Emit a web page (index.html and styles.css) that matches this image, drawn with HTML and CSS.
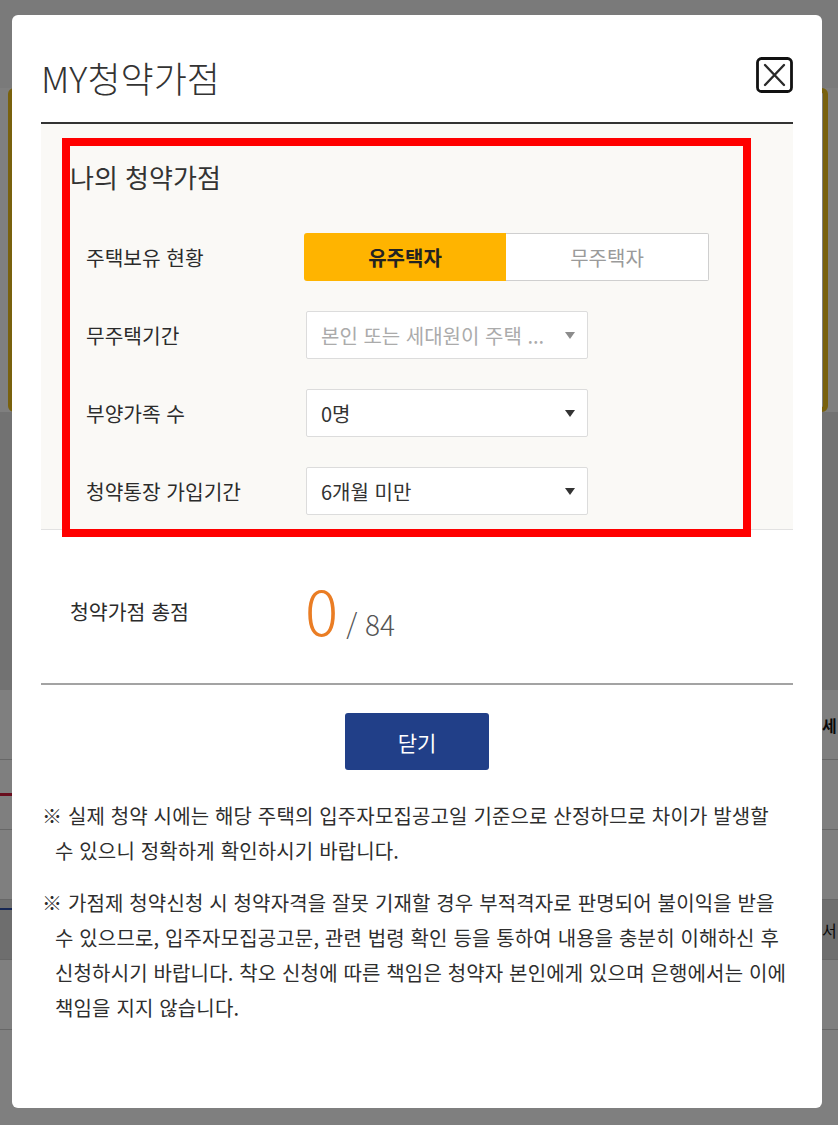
FILE: index.html
```html
<!DOCTYPE html>
<html lang="ko">
<head>
<meta charset="utf-8">
<title>MY청약가점</title>
<link rel="stylesheet" href="styles.css">
</head>
<body>
<div class="page">
  <div class="page-top"></div>
  <div class="page-card"></div>
  <div class="page-band"></div>
  <div class="page-head"><span class="page-text">세</span></div>
  <div class="page-row"><span class="mark-red"></span></div>
  <div class="page-row"></div>
  <div class="page-row page-row-gray"><span class="mark-blue"></span><span class="page-text">서</span></div>
  <div class="page-row"></div>
</div>
<div class="overlay"></div>

<div class="modal" role="dialog" aria-labelledby="modal-title">
  <div class="modal-header">
    <h1 id="modal-title" class="modal-title">MY청약가점</h1>
    <button class="close-btn" type="button" aria-label="닫기">
      <svg width="37" height="36" viewBox="0 0 37 36">
        <rect x="1.5" y="1.5" width="34" height="33" rx="4" fill="none" stroke="#111" stroke-width="2.8"/>
        <path d="M9 8 L28 28 M28 8 L9 28" stroke="#2a2a2a" stroke-width="2.4" stroke-linecap="round"/>
      </svg>
    </button>
  </div>

  <section class="score-form">
    <h2 class="form-title">나의 청약가점</h2>
    <div class="form-rows">
      <div class="form-row">
        <div class="form-label">주택보유 현황</div>
        <div class="toggle">
          <span class="toggle-item is-active">유주택자</span>
          <span class="toggle-item">무주택자</span>
        </div>
      </div>
      <div class="form-row">
        <div class="form-label">무주택기간</div>
        <div class="select is-disabled"><span class="select-text">본인 또는 세대원이 주택 ...</span><span class="caret"></span></div>
      </div>
      <div class="form-row">
        <div class="form-label">부양가족 수</div>
        <div class="select"><span class="select-text">0명</span><span class="caret"></span></div>
      </div>
      <div class="form-row">
        <div class="form-label">청약통장 가입기간</div>
        <div class="select"><span class="select-text">6개월 미만</span><span class="caret"></span></div>
      </div>
    </div>
  </section>

  <div class="total-row">
    <div class="total-label">청약가점 총점</div>
    <div class="total-score"><span class="score-num">0</span><span class="score-max">/ 84</span></div>
  </div>

  <div class="modal-footer">
    <button class="primary-btn" type="button">닫기</button>
  </div>

  <div class="notes">
    <p class="note">※ 실제 청약 시에는 해당 주택의 입주자모집공고일 기준으로 산정하므로 차이가 발생할 수 있으니 정확하게 확인하시기 바랍니다.</p>
    <p class="note">※ 가점제 청약신청 시 청약자격을 잘못 기재할 경우 부적격자로 판명되어 불이익을 받을 수 있으므로, 입주자모집공고문, 관련 법령 확인 등을 통하여 내용을 충분히 이해하신 후 신청하시기 바랍니다. 착오 신청에 따른 책임은 청약자 본인에게 있으며 은행에서는 이에 책임을 지지 않습니다.</p>
  </div>

  <div class="highlight"></div>
</div>
</body>
</html>
```

FILE: styles.css
```css
* { box-sizing: border-box; }

html, body {
  margin: 0;
  padding: 0;
  height: 100%;
  overflow: hidden;
}

body {
  font-family: "Noto Sans CJK KR", "Noto Sans", sans-serif;
  color: #333;
  background: #fff;
}

/* underlying page (dimmed by overlay) */
.page {
  width: 838px;
}
.page-top {
  height: 88px;
  background: #f4f4f4;
}
.page-card {
  height: 324px;
  margin: 0 10px 0 8px;
  border: 5px solid #f2c21a;
  border-radius: 6px;
  background: #fff;
}
.page-band {
  height: 278px;
  background: #e4e4e4;
}
.page-head {
  display: flex;
  justify-content: flex-end;
  align-items: center;
  height: 70px;
  border-bottom: 1px solid #cfcfcf;
}
.page-text {
  width: 16px;
  font-size: 16px;
  font-weight: 700;
  color: #111;
  white-space: nowrap;
}
.page-row {
  display: flex;
  justify-content: space-between;
  align-items: center;
  height: 70px;
  border-bottom: 1px solid #cfcfcf;
}
.page-row-gray {
  height: 60px;
  background: #dcdcdc;
}
.page-row-gray .page-text {
  font-weight: 400;
}
.mark-red {
  width: 30px;
  height: 3px;
  background: #d21a3a;
}
.mark-blue {
  align-self: flex-start;
  width: 30px;
  height: 2px;
  margin-top: 8px;
  background: #2e4fa8;
}

.overlay {
  position: fixed;
  inset: 0;
  background: rgba(0, 0, 0, 0.5);
}

/* modal */
.modal {
  position: fixed;
  left: 12px;
  top: 15px;
  width: 810px;
  height: 1093px;
  background: #fff;
  border-radius: 6px;
}

.modal-header {
  display: flex;
  align-items: center;
  justify-content: space-between;
  height: 109px;
  margin: 0 29px;
  padding: 42px 0 25px 0;
  border-bottom: 2px solid #333;
}
.modal-title {
  margin: 0;
  font-size: 36px;
  font-weight: 300;
  line-height: 40px;
  color: #333;
}
.close-btn {
  display: block;
  width: 37px;
  height: 36px;
  margin: -4px 0 0 0;
  padding: 0;
  border: 0;
  background: none;
}
.close-btn svg { display: block; }

/* gray form */
.score-form {
  margin: 0 29px;
  padding: 38px 0 14px 0;
  background: #faf9f6;
  border-bottom: 1px solid #e2e2e2;
}
.form-title {
  margin: 0;
  padding-left: 29px;
  font-size: 26px;
  font-weight: 400;
  line-height: 30px;
  color: #333;
}
.form-rows {
  display: flex;
  flex-direction: column;
  gap: 30px;
  margin-top: 41px;
  padding-left: 45px;
}
.form-row {
  display: flex;
  align-items: center;
  height: 48px;
}
.form-label {
  width: 218px;
  flex: none;
  font-size: 20.3px;
  color: #2b2b2b;
}

.toggle {
  display: flex;
  width: 405px;
  height: 48px;
}
.toggle-item {
  flex: 1;
  display: flex;
  align-items: center;
  justify-content: center;
  font-size: 20px;
  color: #9a9a9a;
  background: #fff;
  border: 1px solid #cfcfcf;
  border-left: 0;
  border-radius: 0 2px 2px 0;
}
.toggle-item.is-active {
  color: #222;
  font-weight: 700;
  background: #ffb400;
  border: 0;
  border-radius: 3px 0 0 3px;
}

.select {
  display: flex;
  align-items: center;
  justify-content: space-between;
  width: 282px;
  height: 48px;
  margin-left: 2px;
  padding: 0 12px 0 14px;
  background: #fff;
  border: 1px solid #dcdcdc;
  border-radius: 2px;
}
.select-text {
  font-size: 20px;
  color: #333;
  white-space: nowrap;
}
.caret {
  width: 0;
  height: 0;
  border-left: 5px solid transparent;
  border-right: 5px solid transparent;
  border-top: 7px solid #333;
}
.select.is-disabled .select-text { color: #ababab; }
.select.is-disabled .caret { border-top-color: #8c8c8c; }

/* total */
.total-row {
  display: flex;
  align-items: center;
  height: 153px;
  margin: 0 29px;
  padding: 8px 0 0 29px;
}
.total-label {
  width: 235px;
  flex: none;
  font-size: 20.5px;
  color: #2b2b2b;
}
.total-score {
  white-space: nowrap;
}
.score-num {
  font-size: 62px;
  font-weight: 300;
  line-height: 1;
  color: #ea7d24;
}
.score-max {
  margin-left: 8px;
  font-size: 28px;
  font-weight: 300;
  color: #555;
}

/* footer */
.modal-footer {
  display: flex;
  justify-content: center;
  margin: 0 29px;
  padding-top: 28px;
  border-top: 2px solid #a3a3a3;
}
.primary-btn {
  width: 144px;
  height: 57px;
  border: 0;
  border-radius: 3px;
  background: #213f88;
  color: #fff;
  font-family: inherit;
  font-size: 21px;
}

.notes {
  margin-top: 28px;
  padding: 0 32px 0 30px;
}
.note {
  margin: 0 0 17px 0;
  padding-left: 13px;
  text-indent: -13px;
  font-size: 20px;
  line-height: 35px;
  letter-spacing: 0.15px;
  color: #2e2e2e;
  word-break: keep-all;
}

/* annotation frame */
.highlight {
  position: absolute;
  left: 50px;
  top: 123px;
  width: 689px;
  height: 399px;
  border: 8px solid #ff0000;
  pointer-events: none;
}
```
